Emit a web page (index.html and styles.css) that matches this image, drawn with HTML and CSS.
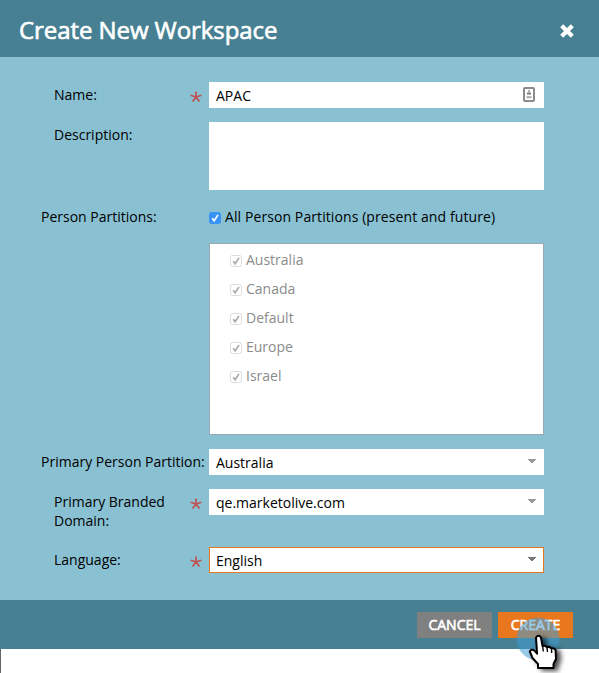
FILE: index.html
```
<!DOCTYPE html>
<html lang="en">
<head>
<meta charset="utf-8">
<title>Create New Workspace</title>
<link rel="stylesheet" href="styles.css">
</head>
<body>
<svg class="defs" width="0" height="0" aria-hidden="true">
  <symbol id="check" viewBox="0 0 12 12"><path d="M3.2 6.3 5.1 8.7 9 2.9" fill="none" stroke="currentColor" stroke-width="1.7"/></symbol>
  <symbol id="arrow" viewBox="0 0 8 4"><path d="M0 0h8v1H7v1H6v1H5v1H3V3H2V2H1V1H0z" fill="currentColor"/></symbol>
  <symbol id="star" viewBox="0 0 12 12"><path d="M6 6V.4M6 6 .6 4.3M6 6l5.4-1.7M6 6l-3.4 4.6M6 6l3.4 4.6" fill="none" stroke="currentColor" stroke-width="1.7"/></symbol>
</svg>
<div class="dialog">
  <header class="header">
    <h1 class="title">Create New Workspace</h1>
    <svg class="close" viewBox="0 0 14 14"><path d="M1.7 1.7l10.6 10.6M12.3 1.7L1.7 12.3" stroke="#fff" stroke-width="4.2"/></svg>
  </header>
  <main class="form">
    <div class="row name">
      <label class="label">Name:</label><svg class="star"><use href="#star"/></svg>
      <div class="field">APAC
        <svg class="card" viewBox="0 0 12 15"><rect x="1" y="1" width="10" height="13" rx=".8" fill="#fff" stroke="#8c8c8c" stroke-width="2"/><path d="M6 3v2" stroke="#999" stroke-width="1.6"/><path d="M4 5.5h4v2H4z" fill="#777"/><path d="M3.5 9.2h5v2h-5z" fill="#aaa"/></svg>
      </div>
    </div>
    <div class="row description">
      <label class="label">Description:</label>
      <div class="field"></div>
    </div>
    <div class="row all">
      <label class="label wide">Person Partitions:</label>
      <div class="option"><span class="box on"><svg><use href="#check"/></svg></span><span class="option-text">All Person Partitions (present and future)</span></div>
    </div>
    <div class="row list">
      <div class="partitions">
        <div class="item"><span class="box"><svg><use href="#check"/></svg></span>Australia</div>
        <div class="item"><span class="box"><svg><use href="#check"/></svg></span>Canada</div>
        <div class="item"><span class="box"><svg><use href="#check"/></svg></span>Default</div>
        <div class="item"><span class="box"><svg><use href="#check"/></svg></span>Europe</div>
        <div class="item"><span class="box"><svg><use href="#check"/></svg></span>Israel</div>
      </div>
    </div>
    <div class="row primary">
      <label class="label wide">Primary Person Partition:</label>
      <div class="field">Australia<svg class="arrow"><use href="#arrow"/></svg></div>
    </div>
    <div class="row domain">
      <label class="label">Primary Branded<br>Domain:</label><svg class="star"><use href="#star"/></svg>
      <div class="field">qe.marketolive.com<svg class="arrow"><use href="#arrow"/></svg></div>
    </div>
    <div class="row language">
      <label class="label">Language:</label><svg class="star"><use href="#star"/></svg>
      <div class="field focus">English<svg class="arrow dark"><use href="#arrow"/></svg></div>
    </div>
  </main>
  <footer class="footer">
    <div class="button cancel">CANCEL</div>
    <div class="button create">CREATE</div>
  </footer>
</div>
<div class="below"></div>
<svg class="pointer" viewBox="0 0 60 63">
  <defs>
    <filter id="shadow" x="-50%" y="-50%" width="200%" height="200%"><feDropShadow dx="4" dy="2" stdDeviation="2.4" flood-color="#000" flood-opacity=".7"/></filter>
    <radialGradient id="glow"><stop offset="0" stop-color="#4a9fd6" stop-opacity=".5"/><stop offset=".94" stop-color="#3d9bd4" stop-opacity=".55"/><stop offset="1" stop-color="#3d9bd4" stop-opacity="0"/></radialGradient>
  </defs>
  <circle cx="30" cy="29" r="22" fill="url(#glow)"/>
  <path filter="url(#shadow)" d="M28.5 27.5q2.5-3.5 5 0l1.5 8.5q3-1 4.3 1.2 3-1 4.6 1.2 3.4-.4 4.2 2.1l.4 8.5-2.5 5v4H30.5v-4l-5.5-6-2.7-6.5q1.4-3 4.7-.8l2.6 3z" fill="#fff" stroke="#000" stroke-width="2" stroke-linejoin="round" transform="translate(-.5 0)"/>
  <path d="M34.7 36l.6 5.5M39 37.5l.5 4.5M43.5 39l.2 4" stroke="#000" stroke-width="1.4" fill="none"/>
</svg>
</body>
</html>
```
FILE: styles.css
```
* { box-sizing: border-box; }
body { margin: 0; background: #fff; font: 14px/19px "Open Sans", "Noto Sans", sans-serif; color: #000; width: 599px; height: 673px; overflow: hidden; position: relative; }
.defs { position: absolute; }
.dialog { height: 649px; background: #89c1d3; display: flex; flex-direction: column; }
.header { height: 57px; background: #478092; display: flex; justify-content: space-between; padding: 0 25px 0 19px; }
.title { margin: 0; color: #fff; font-size: 24px; line-height: 60px; font-weight: 400; letter-spacing: -.07px; -webkit-text-stroke: .65px #fff; }
.close { width: 14px; height: 14px; margin-top: 24px; }
.form { height: 543px; padding-top: 25px; }
.row { display: flex; }
.label { width: 136px; margin-left: 54px; padding-top: 3px; flex: none; }
.label.wide { width: 168px; margin-left: 41px; white-space: nowrap; }
.star { width: 12px; height: 12px; margin: 9px 7px 0 0; color: #c05052; flex: none; }
.field { width: 335px; height: 26px; background: #fff; padding: 4px 7px 0; display: flex; justify-content: space-between; }
.card { width: 12px; height: 15px; margin: 1px 2px 0 0; }
.name { height: 40px; }
.description { height: 81px; }
.description .field { height: 68px; margin-left: 19px; }
.all { height: 40px; }
.all .label { padding-top: 4px; }
.option { display: flex; padding-top: 4px; }
.option-text { letter-spacing: .09px; }
.box { width: 12px; height: 12px; border-radius: 2.5px; border: 1px solid #dcdcdc; color: #aaa; margin: 5px 4px 0 0; flex: none; display: flex; }
.box svg { width: 12px; height: 12px; margin: -1px; flex: none; }
.box.on { background: #3893f6; border-color: #3893f6; color: #fff; }
.list { height: 206px; padding-left: 209px; }
.partitions { width: 335px; height: 192px; border: 1px solid #9ba7b5; background: #fff; color: #8b8b8b; padding: 2px 0 0 20px; }
.item { height: 29px; display: flex; padding-top: 4px; }
.item .box { margin-top: 5px; }
.primary { height: 40px; }
.arrow { width: 8px; height: 4px; color: #999; margin: 6px 1px 0 0; }
.arrow.dark { color: #777; }
.domain { height: 58px; }
.focus { border: 1px solid #e8771e; padding: 3px 6px 0; }
.footer { height: 49px; background: #478092; padding: 12px 26px 0; display: flex; justify-content: flex-end; gap: 6px; }
.button { width: 75px; height: 26px; color: #fff; text-align: center; line-height: 26px; -webkit-text-stroke: .6px #fff; }
.cancel { background: #808080; }
.create { background: #e8771e; }
.below { height: 24px; border-left: 1px solid #666; }
.pointer { position: absolute; left: 508px; top: 610px; width: 60px; height: 63px; }
```
